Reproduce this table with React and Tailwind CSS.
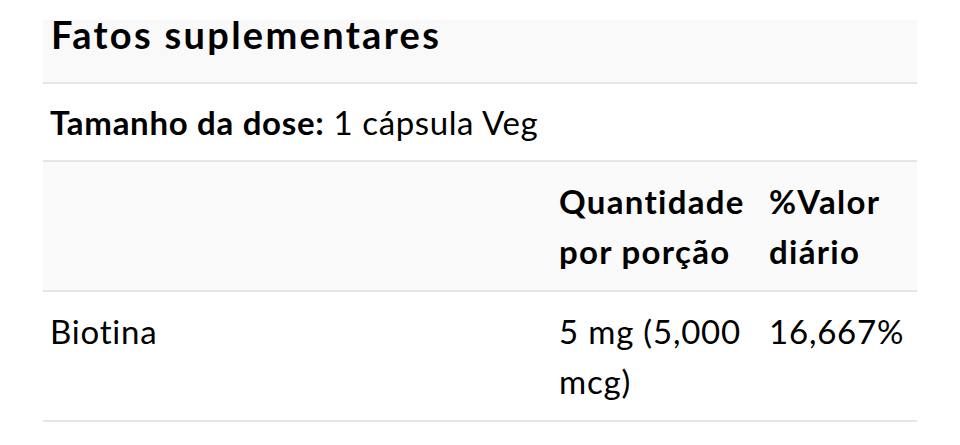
export default function App() {
  return (
    <div
      className="w-[960px] h-[445px] bg-white pt-[20px] pl-[43px] text-black [font-variant-ligatures:none]"
      style={{ fontFamily: 'Lato, "Noto Sans", sans-serif' }}
    >
      <div className="w-[874px]">
        <div className="h-[64px] bg-[#f9f9f9] border-b-2 border-[#e6e6e6] pl-[8px]">
          <h1 className="text-[38px] font-bold leading-[29px] tracking-[2.3px]">Fatos suplementares</h1>
        </div>
        <div className="border-b-2 border-[#e6e6e6] pl-[7px] pr-[8px] py-[13px] text-[33px] leading-[50px] tracking-[0.6px]">
          <span className="font-bold tracking-[0.7px]">Tamanho da dose:</span> 1 cápsula Veg
        </div>
        <div className="grid grid-cols-[509px_210px_155px] bg-[#fafafa] border-b-2 border-[#e6e6e6] text-[33px] leading-[50px] font-bold tracking-[1.3px]">
          <div className="px-[8px] py-[14px]"></div>
          <div className="pl-[7px] pr-[2px] py-[14px]">Quantidade por porção</div>
          <div className="pl-[7px] pr-[2px] py-[14px]">%Valor diário</div>
        </div>
        <div className="grid grid-cols-[509px_210px_155px] border-b-2 border-[#e6e6e6] text-[33px] leading-[50px] tracking-[0.8px]">
          <div className="pl-[7px] pr-[8px] py-[14px]">Biotina</div>
          <div className="pl-[7px] pr-[2px] py-[14px]">5 mg (5,000 mcg)</div>
          <div className="pl-[7px] pr-[2px] py-[14px]">16,667%</div>
        </div>
      </div>
    </div>
  )
}
